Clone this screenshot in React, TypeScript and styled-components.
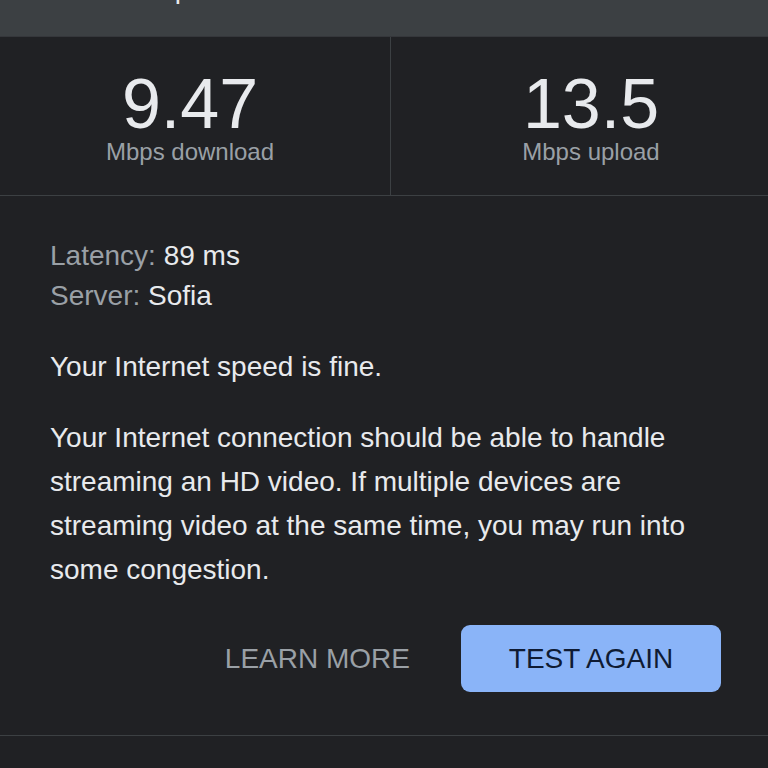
import React from "react"
import styled, { createGlobalStyle } from "styled-components"

const GlobalStyle = createGlobalStyle`
  html, body {
    margin: 0;
    padding: 0;
    background: #202124;
    overflow: hidden;
  }
  body {
    font-family: "Liberation Sans", Arial, sans-serif;
    color: #e8eaed;
  }
`

const Page = styled.div`
  width: 768px;
  height: 768px;
  background: #202124;
  display: flex;
  flex-direction: column;
`

const Header = styled.div`
  height: 37px;
  background: #3c4043;
  border-bottom: 1px solid #35373b;
  box-sizing: border-box;
  overflow: hidden;
  padding-left: 156px;
`

const Title = styled.div`
  margin-top: -25px;
  font-size: 28px;
  line-height: 28px;
  color: #e8eaed;
`

const Stats = styled.div`
  display: grid;
  grid-template-columns: 390px 1fr;
  border-bottom: 1px solid #3c4043;
`

const Stat = styled.div<{ shift: number }>`
  display: flex;
  flex-direction: column;
  align-items: center;
  padding: 28px 0 34px;
  padding-left: ${({ shift }) => (shift > 0 ? shift : 0)}px;
  padding-right: ${({ shift }) => (shift < 0 ? -shift : 0)}px;
  & + & {
    border-left: 1px solid #3c4043;
  }
`

const Value = styled.div`
  font-size: 70px;
  line-height: 78px;
  color: #e8eaed;
`

const Unit = styled.div`
  font-size: 24px;
  line-height: 18px;
  color: #9aa0a6;
`

const Body = styled.div`
  padding: 40px 47px 43px 50px;
  border-bottom: 1px solid #3c4043;
`

const Meta = styled.div`
  font-size: 28px;
  line-height: 40px;
  margin-bottom: 29px;
`

const Key = styled.span`
  color: #9aa0a6;
`

const Text = styled.p`
  margin: 0 0 27px;
  font-size: 28px;
  line-height: 44px;
  color: #e8eaed;
`

const Actions = styled.div`
  display: flex;
  justify-content: flex-end;
  align-items: center;
  gap: 51px;
  margin-top: 33px;
`

const LinkButton = styled.button`
  background: none;
  border: none;
  padding: 0;
  font-family: inherit;
  font-size: 28px;
  color: #9aa0a6;
  cursor: pointer;
`

const PrimaryButton = styled.button`
  width: 260px;
  height: 67px;
  border: none;
  border-radius: 9px;
  background: #8ab4f8;
  font-family: inherit;
  font-size: 28px;
  color: #0f1b33;
  cursor: pointer;
`

export default function App() {
  return (
    <Page>
      <GlobalStyle />
      <Header>
        <Title>Speed test</Title>
      </Header>
      <Stats>
        <Stat shift={-10}>
          <Value>9.47</Value>
          <Unit>Mbps download</Unit>
        </Stat>
        <Stat shift={23}>
          <Value>13.5</Value>
          <Unit>Mbps upload</Unit>
        </Stat>
      </Stats>
      <Body>
        <Meta>
          <div>
            <Key>Latency:</Key> 89 ms
          </div>
          <div>
            <Key>Server:</Key> Sofia
          </div>
        </Meta>
        <Text>Your Internet speed is fine.</Text>
        <Text>
          Your Internet connection should be able to handle streaming an HD
          video. If multiple devices are streaming video at the same time, you
          may run into some congestion.
        </Text>
        <Actions>
          <LinkButton>LEARN MORE</LinkButton>
          <PrimaryButton>TEST AGAIN</PrimaryButton>
        </Actions>
      </Body>
    </Page>
  )
}
